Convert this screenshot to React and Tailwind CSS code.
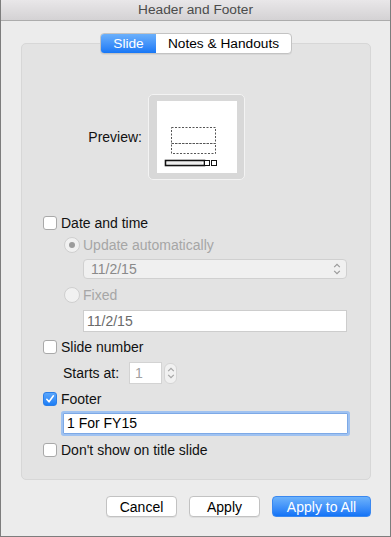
import React from 'react';

const font = { fontFamily: '"Liberation Sans", Arial, sans-serif' };

function Checkbox({ checked }) {
  if (checked) {
    return (
      <span className="w-[14px] h-[14px] rounded-[3px] bg-gradient-to-b from-[#5aa6fb] to-[#1a7ef6] border border-[#2a7ee8] flex items-center justify-center shrink-0">
        <svg width="10" height="10" viewBox="0 0 10 10">
          <path d="M1.8 5.3 L4 7.8 L8.4 1.8" fill="none" stroke="#fff" strokeWidth="1.6" strokeLinecap="round" strokeLinejoin="round" />
        </svg>
      </span>
    );
  }
  return <span className="w-[14px] h-[14px] rounded-[3px] bg-white border border-[#a9a9a9] shrink-0" />;
}

function Radio({ selected }) {
  return (
    <span className="w-[16px] h-[16px] rounded-full bg-[#f1f1f1] border border-[#cfcfcf] flex items-center justify-center shrink-0">
      {selected && <span className="w-[6px] h-[6px] rounded-full bg-[#9c9c9c]" />}
    </span>
  );
}

function Chevrons({ color }) {
  return (
    <svg width="8" height="12" viewBox="0 0 8 12">
      <path d="M1.2 4.2 L4 1.4 L6.8 4.2 M1.2 7.8 L4 10.6 L6.8 7.8" fill="none" stroke={color} strokeWidth="1.2" />
    </svg>
  );
}

function PreviewArt() {
  return (
    <svg width="80" height="72" viewBox="0 0 80 72">
      <rect x="14.5" y="26.5" width="44" height="16" fill="none" stroke="#555" strokeWidth="1" strokeDasharray="2 1.5" />
      <rect x="14.5" y="42.5" width="44" height="10" fill="none" stroke="#555" strokeWidth="1" strokeDasharray="2 1.5" />
      <rect x="8.5" y="59.5" width="39" height="5" fill="#fff" stroke="#111" strokeWidth="1.6" />
      <line x1="10" y1="62" x2="45" y2="62" stroke="#ddd" strokeWidth="1" />
      <rect x="47.5" y="59.5" width="5" height="5" fill="#fff" stroke="#111" strokeWidth="1" />
      <rect x="54.5" y="59.5" width="5" height="5" fill="#fff" stroke="#111" strokeWidth="1" />
    </svg>
  );
}

export default function App() {
  return (
    <div style={font} className="w-[391px] h-[537px] bg-[#ececec] border-x border-b border-[#7d7d7d] flex flex-col text-[14px] text-[#111] overflow-hidden">
      {/* Title bar */}
      <div className="h-[21px] shrink-0 border-b border-[#acacac] bg-gradient-to-b from-[#e9e7e9] to-[#d4d2d4] flex items-center justify-center text-[13.7px] text-[#4b4b4b] leading-none">
        Header and Footer
      </div>

      {/* Tabs */}
      <div className="mt-[12px] h-[21px] flex justify-center relative z-10 text-[13.7px]">
        <div className="flex rounded-[4px] border border-[#c3c3c3] bg-white overflow-hidden shadow-[0_1px_0_rgba(0,0,0,0.05)] ml-[1px]">
          <div className="w-[55px] bg-gradient-to-b from-[#6bb0fb] to-[#1677f6] text-white flex items-center justify-center leading-none">Slide</div>
          <div className="w-[135px] flex items-center justify-center leading-none text-black">Notes &amp; Handouts</div>
        </div>
      </div>

      {/* Group box */}
      <div className="ml-[20px] w-[350px] h-[437px] -mt-[11px] rounded-[5px] bg-[#e3e3e3] border border-[#d7d7d7] flex flex-col">
        <div className="mt-[50px] flex items-center">
          <div className="w-[120px] text-right">Preview:</div>
          <div className="ml-[6px] w-[97px] h-[86px] rounded-[5px] bg-[#d8d8d8] border border-[#f3f3f3] flex items-center justify-center">
            <div className="w-[80px] h-[72px] bg-white">
              <PreviewArt />
            </div>
          </div>
        </div>

        <div className="mt-[33px] h-[20px] pl-[21px] flex items-center gap-[4px]">
          <Checkbox />
          <span>Date and time</span>
        </div>

        <div className="mt-[2px] h-[20px] pl-[42px] flex items-center gap-[3px] text-[#a6a6a6]">
          <Radio selected />
          <span>Update automatically</span>
        </div>

        <div className="mt-[4px] ml-[61px] w-[264px] h-[20px] rounded-[4px] bg-[#f0f0f0] border border-[#d0d0d0] flex items-center justify-between pl-[7px] pr-[5px] text-[#8a8a8a]">
          <span>11/2/15</span>
          <Chevrons color="#9a9a9a" />
        </div>

        <div className="mt-[6px] h-[20px] pl-[42px] flex items-center gap-[3px] text-[#a6a6a6]">
          <Radio />
          <span>Fixed</span>
        </div>

        <div className="mt-[5px] ml-[61px] w-[264px] h-[22px] bg-white border border-[#cdcdcd] flex items-center pl-[3px] text-[#6a6a6a]">
          11/2/15
        </div>

        <div className="mt-[5px] h-[20px] pl-[21px] flex items-center gap-[4px]">
          <Checkbox />
          <span>Slide number</span>
        </div>

        <div className="mt-[5px] h-[22px] pl-[41px] flex items-center">
          <span className="w-[66px]">Starts at:</span>
          <div className="w-[33px] h-[22px] bg-white border border-[#d3d3d3] flex items-center pl-[5px] text-[#a0a0a0]">1</div>
          <div className="ml-[2px] w-[13px] h-[21px] rounded-[6px] bg-[#f1f1f1] border border-[#d5d5d5] flex items-center justify-center">
            <Chevrons color="#a5a5a5" />
          </div>
        </div>

        <div className="mt-[5px] h-[20px] pl-[21px] flex items-center gap-[4px]">
          <Checkbox checked />
          <span>Footer</span>
        </div>

        <div className="mt-[4px] ml-[41px] w-[285px] h-[21px] bg-white border border-[#7da9e6] rounded-[1px] shadow-[0_0_0_2px_#9fc2f1] flex items-center pl-[3px] text-black">
          1 For FY15
        </div>

        <div className="mt-[6px] h-[20px] pl-[21px] flex items-center gap-[4px]">
          <Checkbox />
          <span>Don't show on title slide</span>
        </div>
      </div>

      {/* Buttons */}
      <div className="mt-[16px] flex justify-end pr-[19px] gap-[12px]">
        <button className="w-[71px] h-[21px] rounded-[4px] bg-white border border-[#c2c2c2] shadow-[0_1px_0_rgba(0,0,0,0.06)] leading-none text-black">Cancel</button>
        <button className="w-[71px] h-[21px] rounded-[4px] bg-white border border-[#c2c2c2] shadow-[0_1px_0_rgba(0,0,0,0.06)] leading-none text-black">Apply</button>
        <button className="w-[99px] h-[21px] rounded-[4px] bg-gradient-to-b from-[#6cb2fb] to-[#1173f6] border border-[#3a88f0] leading-none text-white">Apply to All</button>
      </div>
    </div>
  );
}
